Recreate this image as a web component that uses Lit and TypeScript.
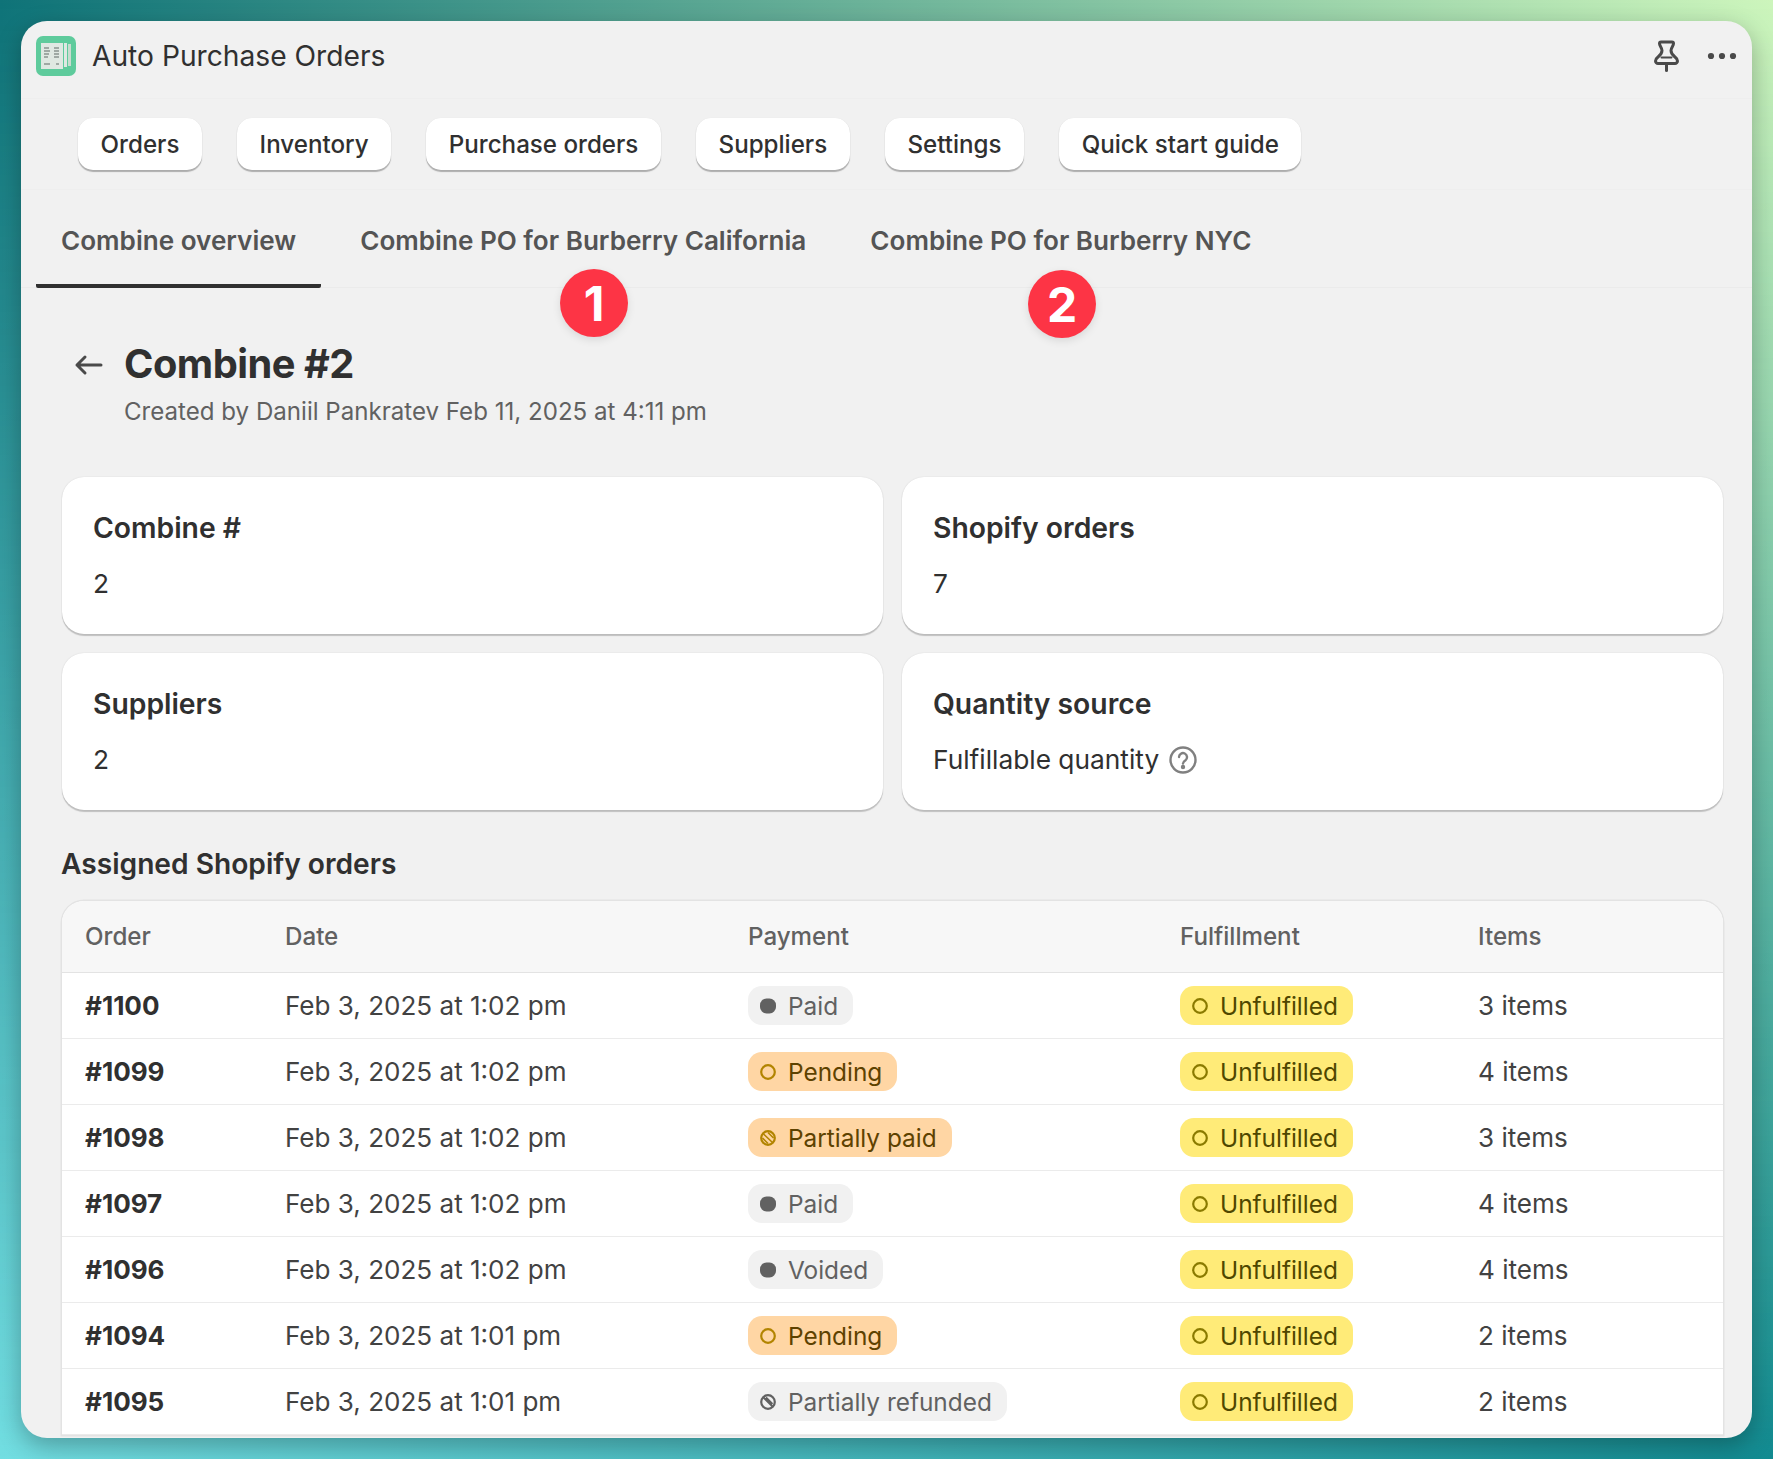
import { LitElement, html, css, svg } from "lit";
import { customElement } from "lit/decorators.js";

type Row = [string, string, string, string];
const rows: Row[] = [
  ["#1100", "Feb 3, 2025 at 1:02 pm", "Paid", "3 items"],
  ["#1099", "Feb 3, 2025 at 1:02 pm", "Pending", "4 items"],
  ["#1098", "Feb 3, 2025 at 1:02 pm", "Partially paid", "3 items"],
  ["#1097", "Feb 3, 2025 at 1:02 pm", "Paid", "4 items"],
  ["#1096", "Feb 3, 2025 at 1:02 pm", "Voided", "4 items"],
  ["#1094", "Feb 3, 2025 at 1:01 pm", "Pending", "2 items"],
  ["#1095", "Feb 3, 2025 at 1:01 pm", "Partially refunded", "2 items"],
];

const ring = svg`<ellipse cx="9" cy="9" rx="6.8" ry="6.8" fill="none" stroke="currentColor" stroke-width="2.2"/>`;
const dot = svg`<rect x="1" y="1.500" width="16" height="15" rx="6.5" fill="currentColor"/>`;
const striped = svg`<circle cx="9" cy="9" r="6.8" fill="none" stroke="currentColor" stroke-width="2.2"/><path d="M4.500 5 13.500 13.500M3.500 9 9 14.500M9 3.500 14.500 9" fill="none" stroke="currentColor" stroke-width="1.6"/>`;
const crossed = svg`<circle cx="9" cy="9" r="6.8" fill="none" stroke="currentColor" stroke-width="2.2"/><path d="M4.500 4.500 13.500 13.500M7 4.500l6.500 6.500" fill="none" stroke="currentColor" stroke-width="1.8"/>`;

const badgeKind: Record<string, [string, unknown]> = {
  Paid: ["grey", dot],
  Voided: ["grey", dot],
  Pending: ["orange", ring],
  "Partially paid": ["orange", striped],
  "Partially refunded": ["grey", crossed],
  Unfulfilled: ["yellow", ring],
};

@customElement("app-root")
export class AppRoot extends LitElement {
  static styles = css`
    :host {
      display: block;
      position: relative;
      width: 1773px;
      height: 1459px;
      box-sizing: border-box;
      padding: 21px;
      overflow: hidden;
      font-family: Inter, "Noto Sans", sans-serif;
      color: #303030;
      background: linear-gradient(to right, #0f7378, #cdf5bc);
    }
    :host::before {
      content: "";
      position: absolute;
      inset: 0;
      background: linear-gradient(to right, #72dee2, #118a90);
      -webkit-mask-image: linear-gradient(to bottom, transparent, #000);
      mask-image: linear-gradient(to bottom, transparent, #000);
    }
    .window {
      position: relative;
      width: 1731px;
      height: 1417px;
      background: #f1f1f1;
      border-radius: 26px;
      overflow: hidden;
      box-shadow: 0 8px 24px rgba(0, 0, 0, 0.28);
    }
    .titlebar {
      height: 78px;
      box-sizing: border-box;
      display: flex;
      align-items: center;
      padding: 0 15px 7px;
      border-bottom: 1px solid #eeeeee;
      gap: 16px;
    }
    .logo {
      width: 40px;
      height: 40px;
      flex: none;
    }
    .apptitle {
      font-size: 28.2px;
      color: #303030;
      flex: 1;
    }
    .pin {
      width: 26px;
      height: 32px;
      flex: none;
      color: #4a4a4a;
      margin-right: 11px;
    }
    .dots {
      width: 30px;
      height: 8px;
      flex: none;
      color: #4a4a4a;
    }
    .nav {
      height: 91px;
      box-sizing: border-box;
      display: flex;
      gap: 35px;
      padding: 19px 0 0 57px;
      border-bottom: 1px solid #eeeeee;
    }
    .btn {
      height: 52px;
      box-sizing: border-box;
      display: flex;
      align-items: center;
      padding: 0 22.6px;
      background: #fff;
      border-radius: 15px;
      font-size: 24.15px;
      font-weight: 500;
      color: #303030;
      box-shadow: 0 1.5px 1px rgba(0, 0, 0, 0.28), 0 0 1px rgba(0, 0, 0, 0.08);
    }
    .tabs {
      height: 98px;
      box-sizing: border-box;
      display: flex;
      gap: 14px;
      padding: 0 15px;
      border-bottom: 1px solid #ebebeb;
    }
    .tab {
      padding: 6px 25px 0;
      display: flex;
      align-items: center;
      font-size: 26.1px;
      font-weight: 600;
      color: #545454;
      border-bottom: 4px solid transparent;
      margin-bottom: -1px;
      border-radius: 0 0 2px 2px;
    }
    .tab.active {
      border-bottom-color: #303030;
    }
    .marker {
      position: absolute;
      width: 68px;
      height: 68px;
      border-radius: 50%;
      background: #fd3445;
      color: #fff;
      display: flex;
      align-items: center;
      justify-content: center;
      font-size: 48px;
      font-weight: 700;
      box-shadow: 0 3px 8px rgba(0, 0, 0, 0.1);
    }
    .m1 {
      left: 539px;
      top: 248px;
    }
    .m2 {
      left: 1007px;
      top: 249px;
    }
    .content {
      padding: 0 29px 0 41px;
    }
    .head {
      display: flex;
      gap: 20px;
      padding: 51px 0 0 0;
      margin-left: 10px;
    }
    .back {
      width: 32px;
      height: 32px;
      margin-top: 10px;
      color: #4a4a4a;
      flex: none;
    }
    h1 {
      margin: 0;
      font-size: 39.8px;
      line-height: 50px;
      font-weight: 700;
      letter-spacing: -0.5px;
      color: #303030;
    }
    .sub {
      font-size: 24.1px;
      line-height: 30px;
      color: #616161;
      margin-top: 8px;
    }
    .cards {
      margin-top: 50px;
      display: grid;
      grid-template-columns: 821px 821px;
      gap: 19px 19px;
    }
    .card {
      height: 157px;
      box-sizing: border-box;
      background: #fff;
      border-radius: 22px;
      padding: 35px 31px 0;
      box-shadow: 0 1.5px 1px rgba(0, 0, 0, 0.2), 0 0 1.5px rgba(0, 0, 0, 0.12);
    }
    .card h3 {
      margin: 0;
      font-size: 28.3px;
      line-height: 32px;
      font-weight: 600;
    }
    .card .val {
      margin-top: 24px;
      font-size: 26.3px;
      line-height: 32px;
      display: flex;
      align-items: center;
      gap: 9px;
    }
    .help {
      width: 30px;
      height: 30px;
      color: #808080;
    }
    h2 {
      margin: 35px 0 0 -1px;
      font-size: 28.15px;
      line-height: 38px;
      font-weight: 600;
    }
    .table {
      margin-top: 18px;
      background: #fff;
      border-radius: 22px 22px 0 0;
      box-shadow: 0 0 0 1.5px #e3e3e3;
      overflow: hidden;
    }
    .row {
      display: grid;
      grid-template-columns: 200px 463px 432px 298px 1fr;
      padding-left: 23px;
      align-items: center;
      height: 66px;
      box-sizing: border-box;
      border-bottom: 1.5px solid #ebebeb;
      font-size: 26.05px;
      color: #424242;
    }
    .row.headrow {
      height: 72px;
      background: #f7f7f7;
      border-bottom: 1.5px solid #e3e3e3;
      font-size: 24.15px;
      color: #616161;
      font-weight: 500;
    }
    .num {
      font-weight: 700;
      color: #303030;
    }
    .badge {
      display: inline-flex;
      align-items: center;
      gap: 11px;
      height: 39px;
      padding: 0 15px 0 11px;
      border-radius: 14px;
      font-size: 24.4px;
      font-weight: 400;
    }
    .badge svg {
      width: 18px;
      height: 18px;
      flex: none;
    }
    .cellb {
      display: flex;
    }
    .grey {
      background: #f1f1f1;
      color: #616161;
    }
    .orange {
      background: #ffd6a4;
      color: #5e4200;
    }
    .orange svg {
      color: #b28400;
    }
    .yellow {
      background: #ffeb78;
      color: #4f4700;
    }
    .yellow svg {
      color: #8a7a00;
    }
  `;

  badge(label: string) {
    const [cls, icon] = badgeKind[label];
    return html`<span class="badge ${cls}"><svg viewBox="0 0 18 18">${icon}</svg>${label}</span>`;
  }

  render() {
    return html`
      <div class="window">
        <div class="titlebar">
          <svg class="logo" viewBox="0 0 40 40">
            <rect width="40" height="40" rx="7" fill="#5ecb9c" />
            <rect x="5" y="7" width="22" height="26" fill="#dfe8e2" />
            <rect x="28" y="7" width="3" height="24" fill="#dfe8e2" />
            <rect x="32" y="8" width="3" height="22" fill="#c8dccf" />
            <path d="M8 12h5M8 15h6M8 18h5M8 21h4M18 12h5M18 15h5M18 18h5M18 21h5M8 28h6M20 28h3" stroke="#8a9490" stroke-width="1.6" />
          </svg>
          <div class="apptitle">Auto Purchase Orders</div>
          <svg class="pin" viewBox="0 0 26 32" fill="none" stroke="currentColor" stroke-width="3" stroke-linejoin="round" stroke-linecap="round">
            <path d="M7 2h11a1.500 1.500 0 0 1 1.500 1.500c0 2.500-2.500 4-2.500 7 0 3 1.500 4.500 4 6.500 2 1.500 2.500 3 2.500 4a2.500 2.500 0 0 1-2.500 2.500H4a2.500 2.500 0 0 1-2.500-2.500c0-1 .5-2.500 2.500-4 2.500-2 4-3.500 4-6.500 0-3-2.500-4.500-2.500-7A1.500 1.500 0 0 1 7 2z" />
            <path d="M12.500 24v6.500" />
            <path d="M7.500 17.500h10" stroke-width="2" />
          </svg>
          <svg class="dots" viewBox="0 0 30 8" fill="currentColor">
            <circle cx="4" cy="4" r="3.100" /><circle cx="15" cy="4" r="3.100" /><circle cx="26" cy="4" r="3.100" />
          </svg>
        </div>
        <div class="nav">
          ${["Orders", "Inventory", "Purchase orders", "Suppliers", "Settings", "Quick start guide"].map(
            (b) => html`<div class="btn">${b}</div>`
          )}
        </div>
        <div class="tabs">
          <div class="tab active">Combine overview</div>
          <div class="tab">Combine PO for Burberry California</div>
          <div class="tab">Combine PO for Burberry NYC</div>
        </div>
        <div class="marker m1">1</div>
        <div class="marker m2">2</div>
        <div class="content">
          <div class="head">
            <svg class="back" viewBox="0 0 32 32" fill="none" stroke="currentColor" stroke-width="3" stroke-linecap="round" stroke-linejoin="round">
              <path d="M29 16H5M13 8l-8 8 8 8" />
            </svg>
            <div>
              <h1>Combine #2</h1>
              <div class="sub">Created by Daniil Pankratev Feb 11, 2025 at 4:11 pm</div>
            </div>
          </div>
          <div class="cards">
            <div class="card"><h3>Combine #</h3><div class="val">2</div></div>
            <div class="card"><h3>Shopify orders</h3><div class="val">7</div></div>
            <div class="card"><h3>Suppliers</h3><div class="val">2</div></div>
            <div class="card">
              <h3>Quantity source</h3>
              <div class="val">
                Fulfillable quantity
                <svg class="help" viewBox="0 0 30 30" fill="none" stroke="currentColor" stroke-width="2.400" stroke-linecap="round">
                  <circle cx="15" cy="15" r="12.500" />
                  <path d="M11 12a4 4 0 1 1 6.500 3.200c-1.500 1-2.500 1.800-2.500 3.300" />
                  <circle cx="15" cy="22" r="1" fill="currentColor" />
                </svg>
              </div>
            </div>
          </div>
          <h2>Assigned Shopify orders</h2>
          <div class="table">
            <div class="row headrow">
              <div>Order</div><div>Date</div><div>Payment</div><div>Fulfillment</div><div>Items</div>
            </div>
            ${rows.map(
              (r) => html`<div class="row">
                <div class="num">${r[0]}</div>
                <div>${r[1]}</div>
                <div class="cellb">${this.badge(r[2])}</div>
                <div class="cellb">${this.badge("Unfulfilled")}</div>
                <div>${r[3]}</div>
              </div>`
            )}
          </div>
        </div>
      </div>
    `;
  }
}
